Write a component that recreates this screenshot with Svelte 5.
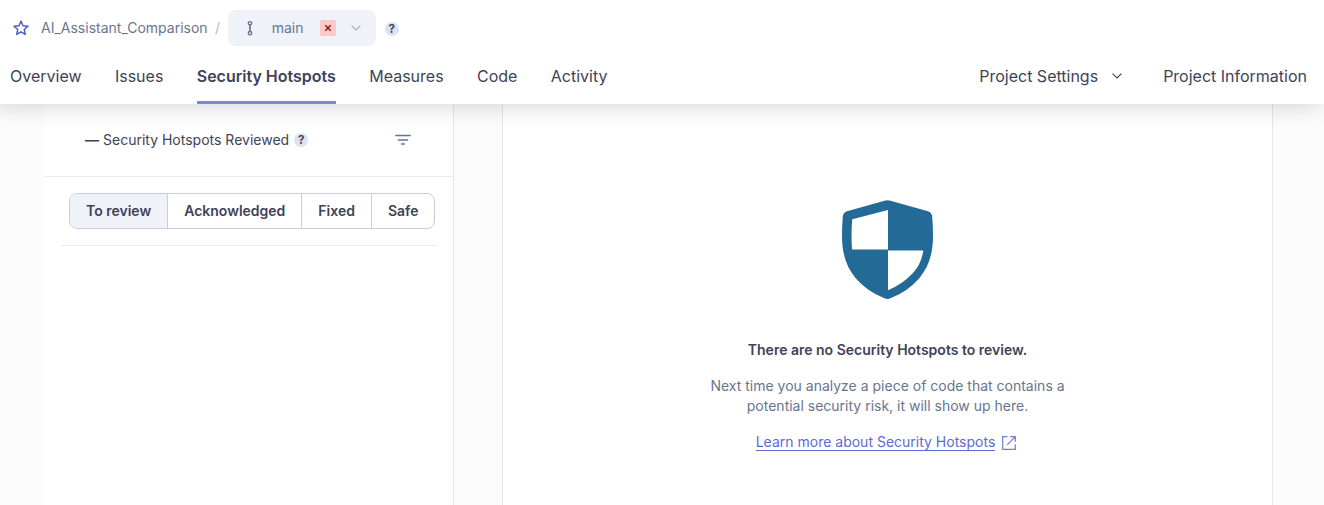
<script>
  const tabs = ['Overview', 'Issues', 'Security Hotspots', 'Measures', 'Code', 'Activity'];
  const filters = ['To review', 'Acknowledged', 'Fixed', 'Safe'];
  let tab = $state('Security Hotspots');
  let filter = $state('To review');
</script>

{#snippet help()}
  <span class="help">?</span>
{/snippet}

<div class="page">
  <header>
    <div class="crumbs">
      <svg class="star" width="18" height="18" viewBox="0 0 18 18" fill="none" stroke="#4b56c7" stroke-width="1.4" stroke-linejoin="round">
        <path d="M9 2.1l2 4.6 5 .5-3.8 3.3 1.1 4.9L9 12.8l-4.3 2.6 1.1-4.9L2 7.2l5-.5z" />
      </svg>
      <span class="project">AI_Assistant_Comparison</span>
      <span class="slash">/</span>
      <button class="branch">
        <svg width="16" height="16" viewBox="0 0 16 16" fill="none" stroke="#69758f" stroke-width="1.4">
          <circle cx="8" cy="3.3" r="1.7" />
          <circle cx="8" cy="13.2" r="1.7" />
          <path d="M8 5v6.5" stroke-width="1.7" />
        </svg>
        <span class="name">main</span>
        <span class="failed">
          <svg width="16" height="16" viewBox="0 0 16 16" stroke="#801b14" stroke-width="1.4"><path d="M5.3 5.3l5.4 5.4M10.7 5.3l-5.4 5.4" /></svg>
        </span>
        <svg class="chev" width="12" height="8" viewBox="0 0 12 8" fill="none" stroke="#a6adbe" stroke-width="1.1"><path d="M1.6 1.6L6 6l4.4-4.4" /></svg>
      </button>
      {@render help()}
    </div>
    <nav>
      {#each tabs as t}
        <button class="tab" class:active={t === tab} onclick={() => (tab = t)}>{t}</button>
      {/each}
      <span class="spacer"></span>
      <button class="tab settings">
        Project Settings
        <svg width="12" height="8" viewBox="0 0 12 8" fill="none" stroke="#3e4357" stroke-width="1.2"><path d="M1.6 1.6L6 6l4.4-4.4" /></svg>
      </button>
      <button class="tab info">Project Information</button>
    </nav>
  </header>

  <main>
    <aside>
      <div class="reviewed">
        <span class="dash">—</span>
        <span class="label">Security Hotspots Reviewed</span>
        {@render help()}
        <svg class="filter" width="16" height="12" viewBox="0 0 16 12" fill="none" stroke="#69758f" stroke-width="1.4" stroke-linecap="round"><path d="M.8 1.5h14.4M3.4 6h9.2M6.6 10h2.8" /></svg>
      </div>
      <div class="list">
        <div class="toggle">
          {#each filters as f}
            <button class:on={f === filter} onclick={() => (filter = f)}>{f}</button>
          {/each}
        </div>
      </div>
    </aside>
    <section>
      <svg class="shield" width="91" height="99" viewBox="0 0 91 99">
        <path fill="#236a97" d="M42.5 .8Q45.5-.4 48.5 .8L86 11.2Q89.8 12.4 90.2 16.5Q91 26 91 36C91 54 86.5 67 77.5 78Q66 91.5 48.5 98.3Q45.5 99.5 42.5 98.3Q25 91.5 13.5 78C4.5 67 0 54 0 36Q0 26 .8 16.5Q1.2 12.4 5 11.2Z" />
        <path fill="#fff" d="M46 10V49.5H10Q9 34 10.2 19.2ZM46 50.5H81.3Q79.5 64 70.5 73.5Q60 84.5 46 90.2Z" />
      </svg>
      <h1>There are no Security Hotspots to review.</h1>
      <p>Next time you analyze a piece of code that contains a potential security risk, it will show up here.</p>
      <div class="more">
        <a href="#learn">Learn more about Security Hotspots</a>
        <svg width="16" height="16" viewBox="0 0 16 16" fill="none" stroke="#6f7cd6" stroke-width="1.2"><path d="M6.5 1.7H1.7v12.6h12.6V9.2M9.3 1.7h5v5M14.3 1.7L6.2 9.8" /></svg>
      </div>
    </section>
  </main>
</div>

<style>
  :global(body) { background: #fcfcfd; }
  .page { height: 505px; overflow: hidden; display: flex; flex-direction: column; font: 14px/20px Inter, sans-serif; color: #3e4357; }
  button { font: inherit; color: inherit; background: none; border: 0; padding: 0; margin: 0; }
  svg { display: block; flex: none; }
  header { position: relative; z-index: 1; flex: none; box-sizing: border-box; height: 104px; background: #fff; box-shadow: -5px 4px 20px rgba(29, 33, 47, .17); }
  .crumbs { display: flex; align-items: center; height: 36px; padding: 10px 0 0 12px; color: #69758f; }
  .project { margin-left: 11px; }
  .slash { margin-left: 7.5px; color: #b4b7bf; }
  .branch { display: flex; align-items: center; box-sizing: border-box; width: 148px; height: 36px; margin-left: 7.5px; padding-left: 14px; background: #eff2f9; border-radius: 8px; }
  .name { margin-left: 14px; }
  .failed { margin-left: 16.5px; background: #fec9c6; border-radius: 2px; }
  .chev { margin-left: 14.5px; }
  .help { display: inline-flex; align-items: center; justify-content: center; width: 14px; height: 14px; border-radius: 50%; background: #dde3f3; color: #3e4357; font-size: 11.5px; line-height: 14px; font-weight: 700; }
  .crumbs .help { margin: 2px 0 0 9px; }
  nav { display: flex; height: 58px; padding: 0 17px 0 10px; font-size: 16px; }
  .tab { display: flex; align-items: center; box-sizing: border-box; margin-right: 33.4px; padding-top: 4px; border-bottom: 3px solid transparent; white-space: nowrap; }
  .tab.active { font-weight: 600; border-color: #7b87d9; }
  .spacer { flex: 1; }
  .settings { margin-right: 40px; gap: 13px; }
  .info { margin-right: 0; }
  main { flex: 1; display: flex; padding-left: 45px; }
  aside { flex: none; box-sizing: border-box; width: 409px; background: #fff; border-right: 1px solid #e1e6f3; }
  .reviewed { display: flex; align-items: center; box-sizing: border-box; height: 73px; padding: 0 42px 0 40px; border-bottom: 1px solid #ebebeb; }
  .dash { font-weight: 600; }
  .label { margin: 0 5px 0 4px; }
  .filter { margin-left: auto; }
  .list { margin: 0 16px; padding: 16px 0 16px 8px; border-bottom: 1px solid #ebebeb; }
  .toggle { display: flex; box-sizing: border-box; width: 366px; height: 36px; border: 1px solid #c5cddf; border-radius: 8px; overflow: hidden; }
  .toggle button { padding: 0 16px; font-weight: 600; border-left: 1px solid #c5cddf; white-space: nowrap; }
  .toggle button:first-child { border-left: 0; }
  .toggle .on { background: #eff2f9; }
  section { display: flex; flex-direction: column; align-items: center; box-sizing: border-box; width: 771px; margin-left: 48px; padding-top: 96px; background: #fff; border: solid #e6e6e6; border-width: 0 1px; }
  h1 { margin: 41px 0 0; font-size: 14px; line-height: 20px; font-weight: 600; }
  p { width: 400px; margin: 16px 0 18px; text-align: center; color: #69758f; }
  .more { display: flex; align-items: center; gap: 6px; padding-right: 2px; }
  a { color: #5d6cd0; text-decoration: none; line-height: 16px; border-bottom: 1px solid #5d6cd0; }
</style>
